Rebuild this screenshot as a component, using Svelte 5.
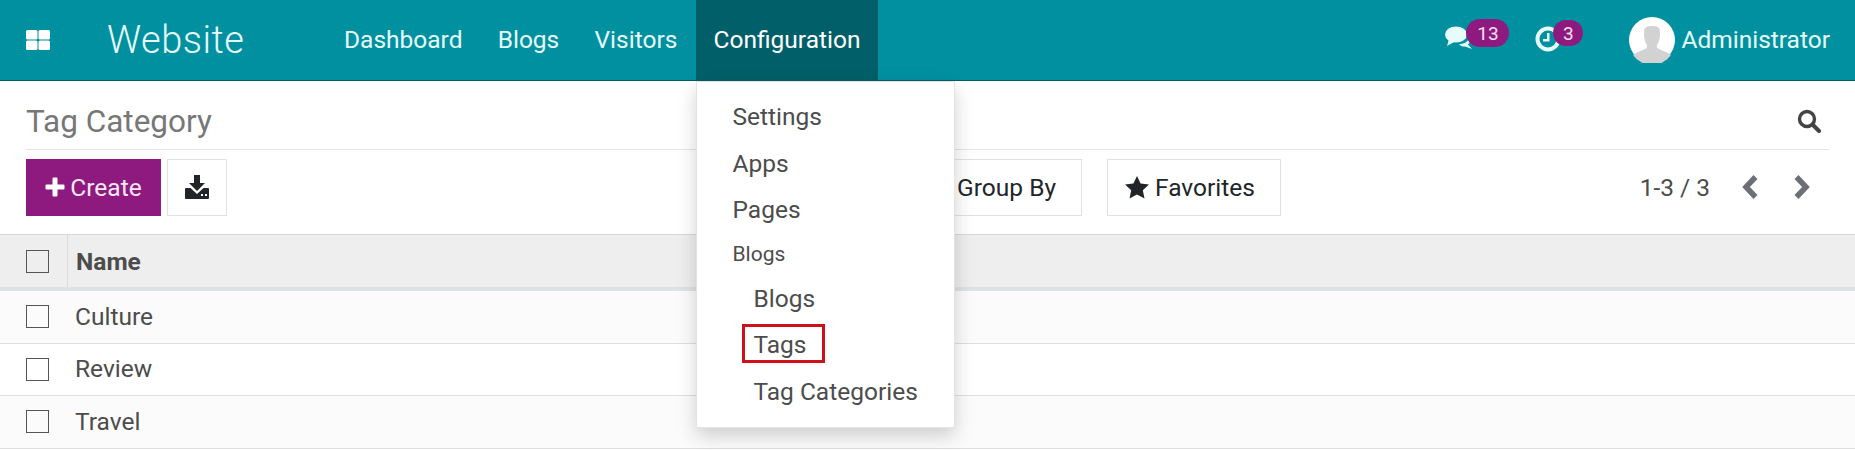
<script>
  const nav = ['Dashboard', 'Blogs', 'Visitors'];
  const rows = ['Culture', 'Review', 'Travel'];
</script>

<div class="page">
  <header class="navbar">
    <button class="apps" aria-label="Apps">
      <svg width="24" height="20" viewBox="0 0 24 20"><rect x="0" y="0" width="11.500" height="9.500" rx="1.500"/><rect x="12.500" y="0" width="11.500" height="9.500" rx="1.500"/><rect x="0" y="10.500" width="11.500" height="9.500" rx="1.500"/><rect x="12.500" y="10.500" width="11.500" height="9.500" rx="1.500"/></svg>
    </button>
    <div class="brand">Website</div>
    <nav class="menu">
      {#each nav as item}<span class="nav-item">{item}</span>{/each}
      <span class="nav-item active">Configuration</span>
    </nav>
    <div class="systray">
      <div class="tray tray-chat">
        <svg width="28" height="24" viewBox="0 0 28 24"><ellipse cx="11" cy="8.5" rx="11" ry="8"/><path d="M4 13 L2 20 L11 15Z"/><path d="M14 18 C19 18 22 16 24 13 C25 15 25 17 23 18.500 L27 23 L20 20.500 C18 20.800 15.500 20 14 18Z"/></svg>
        <span class="badge b13">13</span>
      </div>
      <div class="tray tray-clock">
        <svg width="26" height="26" viewBox="0 0 26 26"><circle cx="13" cy="13" r="10.500" fill="none" stroke="currentColor" stroke-width="4"/><path d="M12 7h2.500v8.500H8V13h4z"/></svg>
        <span class="badge b3">3</span>
      </div>
      <div class="user">
        <svg class="avatar" width="46" height="46" viewBox="0 0 46 46">
          <circle cx="23" cy="23" r="23" fill="#fff"/>
          <path d="M4 38 C8 35 14 33 18 31 L18 28 C15 24 15 18 15 15 C15 10 18 9 23 9 C28 9 31 10 31 15 C31 18 31 24 28 28 L28 31 C32 33 38 35 42 38 A23 23 0 0 1 4 38Z" fill="#d2d2d2"/>
        </svg>
        <span class="user-name">Administrator</span>
      </div>
    </div>
  </header>

  <section class="panel">
    <div class="title-row">
      <h1>Tag Category</h1>
      <svg class="search" width="24" height="24" viewBox="0 0 24 24"><circle cx="10" cy="10" r="7.500" fill="none" stroke="#444" stroke-width="3.400"/><path d="M15.500 15.500 L22 22" stroke="#444" stroke-width="4" stroke-linecap="round"/></svg>
    </div>
    <div class="tool-row">
      <div class="left">
        <button class="create">
          <svg width="20" height="20" viewBox="0 0 20 20"><path d="M7.500 1.500a1 1 0 0 1 1-1h3a1 1 0 0 1 1 1v6h6a1 1 0 0 1 1 1v3a1 1 0 0 1-1 1h-6v6a1 1 0 0 1-1 1h-3a1 1 0 0 1-1-1v-6h-6a1 1 0 0 1-1-1v-3a1 1 0 0 1 1-1h6z" fill="#fff"/></svg>
          Create
        </button>
        <button class="btn square" aria-label="Export">
          <svg width="24" height="24" viewBox="0 0 24 24" fill="#212529"><path d="M9 0h6v8h5l-8 8-8-8h5z"/><path d="M0 14a1 1 0 0 1 1-1h4.500l6.500 6 6.500-6H23a1 1 0 0 1 1 1v9a1 1 0 0 1-1 1H1a1 1 0 0 1-1-1z"/><rect x="16" y="19" width="2" height="2" fill="#fff"/><rect x="20" y="19" width="2" height="2" fill="#fff"/></svg>
        </button>
      </div>
      <div class="search-opts">
        <button class="btn groupby">Group By</button>
        <button class="btn fav">
          <svg width="24" height="23" viewBox="0 0 24 23" fill="#212529"><path d="M12 0l3.600 7.600 8.400 1-6.200 5.700 1.700 8.300L12 18.400 4.500 22.600l1.700-8.300L0 8.600l8.400-1z"/></svg>
          Favorites
        </button>
      </div>
      <div class="pager">
        <span class="range">1-3 / 3</span>
        <svg width="20" height="26" viewBox="0 0 20 26"><path d="M15.500 3 L6 13 L15.500 23" fill="none" stroke="#6c6f76" stroke-width="5.500"/></svg>
        <svg width="20" height="26" viewBox="0 0 20 26"><path d="M4.500 3 L14 13 L4.500 23" fill="none" stroke="#6c6f76" stroke-width="5.500"/></svg>
      </div>
    </div>
  </section>

  <div class="table">
    <div class="thead">
      <span class="cell-check"><i class="box"></i></span>
      <span class="th">Name</span>
    </div>
    {#each rows as row}
      <div class="row">
        <span class="cell-check"><i class="box"></i></span>
        <span class="td">{row}</span>
      </div>
    {/each}
  </div>

  <div class="dropdown">
    <a href="#a" class="item">Settings</a>
    <a href="#a" class="item">Apps</a>
    <a href="#a" class="item">Pages</a>
    <div class="header">Blogs</div>
    <a href="#a" class="item sub">Blogs</a>
    <a href="#a" class="item sub tags">Tags</a>
    <a href="#a" class="item sub">Tag Categories</a>
  </div>
</div>

<style>
  :global(body) { margin: 0; background: #fff; }
  .page { position: relative; width: 1855px; height: 450px; overflow: hidden; font-family: Roboto, sans-serif; color: #4c4c4c; font-size: 24.5px; }
  button { font: inherit; cursor: pointer; }

  .navbar { display: flex; align-items: center; height: 80px; background: #00909f; border-bottom: 1px solid #005a62; color: #e6fbfb; }
  .apps { display: flex; background: none; border: 0; padding: 0; margin-left: 26px; width: 81px; }
  .apps svg { fill: #fff; }
  .brand { font-size: 38px; font-weight: 300; width: 219.400px; letter-spacing: .5px; }
  .menu { display: flex; align-self: stretch; }
  .nav-item { display: flex; align-items: center; padding: 0 17.600px 2px; }
  .nav-item.active { background: #005f68; color: #fff; margin-left: 1px; }
  .systray { margin-left: auto; display: flex; align-items: center; padding-right: 25px; }
  .tray { position: relative; display: flex; }
  .tray svg { fill: currentColor; }
  .tray-chat { width: 90px; margin-top: -4px; }
  .tray-clock { width: 94px; margin-top: -2px; }
  .badge { position: absolute; display: flex; align-items: center; justify-content: center; background: #8f1a7f; color: #f3e0f0; font-size: 19px; border-radius: 14px; }
  .b13 { left: 21px; top: -7px; width: 43px; height: 28px; }
  .b3 { left: 18px; top: -6px; width: 30px; height: 26px; }
  .user { display: flex; align-items: center; gap: 6px; }
  .user-name { padding-bottom: 2px; }

  .panel { padding: 0 26px; }
  .title-row { display: flex; align-items: center; justify-content: space-between; height: 69px; box-sizing: border-box; padding-top: 12px; border-bottom: 1px solid #e5e5e5; }
  h1 { margin: 0; font-size: 31.500px; font-weight: 400; color: #777; }
  .search { margin-right: 8px; }
  .tool-row { display: flex; align-items: center; margin-top: 8px; height: 58px; }
  .left { display: flex; gap: 6px; width: 881px; }
  .create { display: flex; align-items: center; gap: 5px; width: 135px; height: 57px; justify-content: center; background: #8f1a7f; color: #f5e9f3; border: 0; }
  .btn { display: flex; align-items: center; gap: 6px; height: 57px; background: #fff; border: 1px solid #dee2e6; color: #212529; padding: 0 24px 0 17px; }
  .square { width: 60px; padding: 0; justify-content: center; }
  .search-opts { display: flex; gap: 25px; }
  .groupby { width: 175px; padding: 0 25px 0 0; justify-content: flex-end; }
  .fav { width: 174px; padding: 0 0 0 17px; }
  .pager { margin-left: auto; display: flex; align-items: center; gap: 32px; padding-right: 17px; }
  .range { margin-right: -2px; }

  .table { margin-top: 18px; }
  .thead { display: flex; align-items: stretch; height: 52px; background: #eee; border-top: 1px solid #d8d8d8; border-bottom: 4px solid #dee2e6; font-weight: 700; }
  .cell-check { display: flex; align-items: center; width: 68px; padding-left: 26px; box-sizing: border-box; flex: none; }
  .thead .cell-check { border-right: 1px solid #dcdcdc; }
  .box { display: block; width: 23px; height: 23px; box-sizing: border-box; border: 1px solid #555; }
  .th { display: flex; align-items: center; padding-left: 8px; }
  .row { display: flex; align-items: stretch; height: 52.500px; border-bottom: 1px solid #dedede; background: #fff; box-sizing: border-box; }
  .row:nth-child(even) { background: #fbfbfb; }
  .td { display: flex; align-items: center; padding-left: 7px; padding-bottom: 1px; }

  .dropdown { position: absolute; left: 696px; top: 81px; width: 259px; height: 347px; box-sizing: border-box; padding-top: 12px; background: #fff; border: 1px solid #e4e4e4; box-shadow: 0 8px 18px rgba(0,0,0,.18); }
  .item { display: block; height: 46.500px; line-height: 46.500px; padding-left: 35.500px; color: #4c4c4c; text-decoration: none; }
  .sub { padding-left: 56.500px; position: relative; }
  .header { height: 42px; line-height: 40px; padding-left: 35.500px; font-size: 21px; }
  .tags::after { content: ""; position: absolute; left: 45px; top: 1.500px; width: 83px; height: 39px; box-sizing: border-box; border: 3px solid #d01018; }
</style>
